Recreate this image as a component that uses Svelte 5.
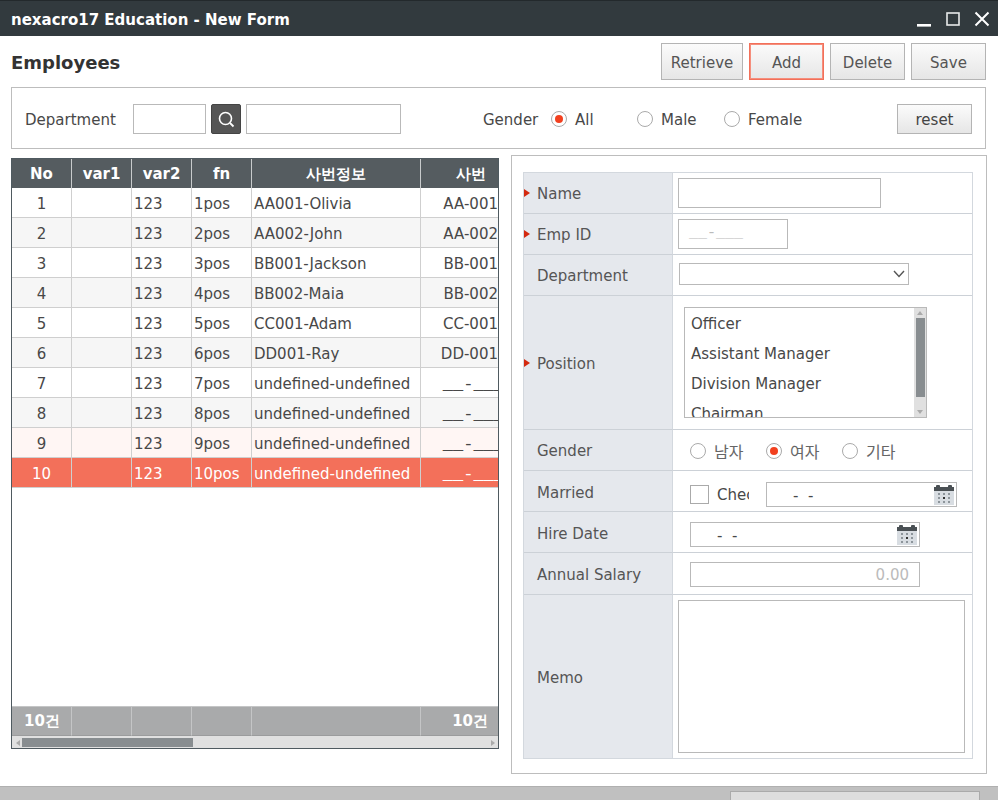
<script lang="ts">
	const rows = [
		{ no: 1, fn: '1pos', info: 'AA001-Olivia', id: 'AA-001' },
		{ no: 2, fn: '2pos', info: 'AA002-John', id: 'AA-002' },
		{ no: 3, fn: '3pos', info: 'BB001-Jackson', id: 'BB-001' },
		{ no: 4, fn: '4pos', info: 'BB002-Maia', id: 'BB-002' },
		{ no: 5, fn: '5pos', info: 'CC001-Adam', id: 'CC-001' },
		{ no: 6, fn: '6pos', info: 'DD001-Ray', id: 'DD-001' },
		{ no: 7, fn: '7pos', info: 'undefined-undefined', id: '__-___' },
		{ no: 8, fn: '8pos', info: 'undefined-undefined', id: '__-___' },
		{ no: 9, fn: '9pos', info: 'undefined-undefined', id: '__-___' },
		{ no: 10, fn: '10pos', info: 'undefined-undefined', id: '__-___' }
	];
	const positions = ['Officer', 'Assistant Manager', 'Division Manager', 'Chairman'];
</script>

{#snippet calendar()}
	<svg class="cal" viewBox="0 0 20 20" width="20" height="20">
		<rect x="0" y="2" width="20" height="18" fill="#d8dde2" />
		<rect x="0" y="2" width="20" height="4" fill="#4a5054" />
		<rect x="2" y="0" width="4" height="3" rx="1" fill="#4a5054" />
		<rect x="14" y="0" width="4" height="3" rx="1" fill="#4a5054" />
		{#each [8, 12, 16] as y}
			{#each [4, 9, 14] as x}
				<rect {x} {y} width="2" height="2" fill={x === 9 && y === 12 ? '#333' : '#8d959b'} />
			{/each}
		{/each}
	</svg>
{/snippet}

{#snippet radio(label: string, on: boolean)}
	<span class="radio-item">
		<span class="radio" class:on></span>
		<span class="radio-text">{label}</span>
	</span>
{/snippet}

<div class="window">
	<header class="titlebar">
		<span class="title">nexacro17 Education - New Form</span>
		<div class="win-btns">
			<svg viewBox="0 0 16 16" width="16" height="16"><rect x="1" y="13" width="14" height="2.6" fill="#fff" /></svg>
			<svg viewBox="0 0 16 16" width="16" height="16"><rect x="2" y="2" width="12" height="12" fill="none" stroke="#e8eaea" stroke-width="1.6" /></svg>
			<svg viewBox="0 0 16 16" width="16" height="16"><path d="M1.5 1.5 14.5 14.5M14.5 1.5 1.5 14.5" stroke="#fff" stroke-width="2" /></svg>
		</div>
	</header>

	<div class="head">
		<h1>Employees</h1>
		<div class="actions">
			<button class="btn retrieve">Retrieve</button>
			<button class="btn add">Add</button>
			<button class="btn delete">Delete</button>
			<button class="btn save">Save</button>
		</div>
	</div>

	<section class="search">
		<span class="s-label">Department</span>
		<span class="box code"></span>
		<button class="search-btn" aria-label="search">
			<svg viewBox="0 0 18 18" width="18" height="18">
				<circle cx="8.5" cy="8.5" r="6" fill="none" stroke="#fff" stroke-width="1.6" />
				<path d="M13 13 16.5 16.5" stroke="#fff" stroke-width="1.8" />
			</svg>
		</button>
		<span class="box dept-name"></span>
		<span class="g-label">Gender</span>
		<div class="g-radios">
			<span class="g-all">{@render radio('All', true)}</span>
			<span class="g-male">{@render radio('Male', false)}</span>
			<span>{@render radio('Female', false)}</span>
		</div>
		<button class="btn reset">reset</button>
	</section>

	<main class="body">
		<div class="grid">
			<div class="grid-row grid-head">
				<div>No</div><div>var1</div><div>var2</div><div>fn</div><div>사번정보</div><div class="head-id">사번</div>
			</div>
			{#each rows as r, i}
				<div class="grid-row data" class:alt={i % 2 === 1} class:blush={r.no === 9} class:selected={r.no === 10}>
					<div class="c">{r.no}</div>
					<div></div>
					<div>123</div>
					<div>{r.fn}</div>
					<div>{r.info}</div>
					<div class="r"><span class:blank={r.id.startsWith('_')}>{r.id}</span></div>
				</div>
			{/each}
			<div class="grid-blank"></div>
			<div class="grid-row grid-sum">
				<div>10건</div><div></div><div></div><div></div><div></div><div class="sum-r">10건</div>
			</div>
			<div class="hscroll">
				<span class="arrow-l"></span>
				<span class="thumb"></span>
				<span class="arrow-r"></span>
			</div>
		</div>

		<div class="detail">
			<div class="form">
				<div class="lbl req">Name</div>
				<div class="val"><span class="box name"></span></div>

				<div class="lbl req">Emp ID</div>
				<div class="val"><span class="box empid">__-___</span></div>

				<div class="lbl">Department</div>
				<div class="val">
					<span class="box combo">
						<svg viewBox="0 0 12 8" width="12" height="8"><path d="M1 1 6 6.5 11 1" fill="none" stroke="#555" stroke-width="1.4" /></svg>
					</span>
				</div>

				<div class="lbl req">Position</div>
				<div class="val">
					<div class="box list">
						<div class="items">
							{#each positions as p}
								<div class="item">{p}</div>
							{/each}
						</div>
						<div class="vscroll">
							<span class="up"></span>
							<span class="vthumb"></span>
							<span class="down"></span>
						</div>
					</div>
				</div>

				<div class="lbl">Gender</div>
				<div class="val gender">
					{@render radio('남자', false)}
					{@render radio('여자', true)}
					{@render radio('기타', false)}
				</div>

				<div class="lbl high">Married</div>
				<div class="val married">
					<span class="check"></span>
					<span class="check-text">Check</span>
					<span class="box date wide"><span class="dashes">-&nbsp;&nbsp;-</span>{@render calendar()}</span>
				</div>

				<div class="lbl high">Hire Date</div>
				<div class="val hire">
					<span class="box date"><span class="dashes">-&nbsp;&nbsp;-</span>{@render calendar()}</span>
				</div>

				<div class="lbl">Annual Salary</div>
				<div class="val salary-cell"><span class="box salary">0.00</span></div>

				<div class="lbl last">Memo</div>
				<div class="val last"><span class="box memo"></span></div>
			</div>
		</div>
	</main>

	<footer class="bottom">
		<span class="bottom-btn"></span>
	</footer>
</div>

<style>
	:global(body) {
		background: #fff;
	}

	.window {
		width: 998px;
		height: 800px;
		overflow: hidden;
		font-family: 'DejaVu Sans', sans-serif;
		font-size: 15px;
		color: #484848;
		display: flex;
		flex-direction: column;
	}

	.titlebar {
		height: 36px;
		box-sizing: border-box;
		flex: none;
		background: #323a3e;
		border-top: 1px solid #23292c;
		display: flex;
		align-items: center;
		justify-content: space-between;
		padding: 0 8px 0 11px;
	}

	.title {
		color: #fff;
		font-weight: 700;
		font-size: 15px;
		padding-top: 2px;
	}

	.win-btns {
		display: flex;
		gap: 13px;
	}

	.head {
		height: 51px;
		flex: none;
		display: flex;
		align-items: center;
		justify-content: space-between;
		padding: 0 12px 0 11px;
		box-sizing: border-box;
	}

	h1 {
		margin: 0;
		padding-top: 2px;
		font-size: 18px;
		font-weight: 700;
		color: #333;
	}

	.actions {
		display: flex;
		gap: 6px;
	}

	.btn {
		height: 37px;
		box-sizing: border-box;
		border: 1px solid #b4b4b4;
		background: linear-gradient(#fbfbfb, #e6e6e6);
		font: inherit;
		color: #555;
		padding: 2px 0 0;
	}

	.retrieve { width: 82px; }
	.btn.add {
		width: 75px;
		border-color: #f2705a;
		box-shadow: 0 0 0 1px #f58e7c inset;
	}
	.delete { width: 75px; }
	.save { width: 75px; }

	.search {
		flex: none;
		margin: 0 12px 0 11px;
		height: 62px;
		box-sizing: border-box;
		border: 1px solid #bdbdbd;
		display: flex;
		align-items: center;
		padding: 2px 0 0 13px;
	}

	.s-label { width: 108px; flex: none; padding-top: 2px; }

	.box {
		display: block;
		box-sizing: border-box;
		background: #fff;
		border: 1px solid #b9b9b9;
	}

	.code { width: 73px; height: 30px; flex: none; }

	.search-btn {
		width: 30px;
		height: 30px;
		flex: none;
		margin: 0 5px;
		padding: 0;
		border: 1px solid #444;
		border-radius: 2px;
		background: #555;
		display: flex;
		align-items: center;
		justify-content: center;
	}

	.dept-name { width: 155px; height: 30px; flex: none; }
	.g-label { margin-left: 82px; width: 68px; flex: none; padding-top: 2px; }

	.g-radios {
		display: flex;
		flex: none;
		width: 346px;
		padding-top: 2px;
	}

	.g-radios .radio-text { padding-top: 2px; }

	.g-all { width: 86px; }
	.g-male { width: 87px; }

	.radio-item {
		display: inline-flex;
		align-items: center;
		gap: 8px;
	}

	.radio {
		width: 16px;
		height: 16px;
		box-sizing: border-box;
		border-radius: 50%;
		border: 1px solid #aaa;
		background: #fff;
		position: relative;
		flex: none;
	}

	.radio.on::after {
		content: '';
		position: absolute;
		inset: 3px;
		border-radius: 50%;
		background: #f2401f;
	}

	.reset {
		width: 75px;
		height: 30px;
		color: #444;
	}

	.body {
		flex: 1;
		display: flex;
		align-items: flex-start;
		padding: 6px 12px 0 11px;
		gap: 12px;
		min-height: 0;
	}

	.grid {
		width: 488px;
		height: 591px;
		margin-top: 3px;
		box-sizing: border-box;
		border: 1px solid #4f5a60;
		display: flex;
		flex-direction: column;
		overflow: hidden;
		flex: none;
		background: #fff;
	}

	.grid-row {
		display: grid;
		grid-template-columns: 60px 60px 60px 60px 169px 77px;
		flex: none;
	}

	.grid-row > div {
		box-sizing: border-box;
		border-right: 1px solid #cfcfcf;
		border-bottom: 1px solid #cfcfcf;
		padding: 0 2px;
		height: 30px;
		line-height: 29px;
		white-space: nowrap;
		overflow: hidden;
	}

	.grid-row > div:last-child { border-right: none; }

	.grid-row.data > div { padding-top: 2px; }

	.grid-head > div {
		background: #555c60;
		color: #fff;
		font-weight: 700;
		text-align: center;
		border-color: #c8cbcc;
		border-bottom: none;
		height: 29px;
		line-height: 29px;
		padding-top: 1px;
	}

	.grid-row > .head-id { padding-left: 24px; }

	.data .c { text-align: center; }

	.grid-row.data > .r {
		text-align: right;
		padding-left: 0;
		padding-right: 0;
	}

	.data .r .blank {
		display: inline-block;
		font-family: 'Liberation Mono', monospace;
		font-size: 17px;
		margin-right: -6px;
	}

	.data.alt > div { background: #f6f6f6; }
	.data.blush > div { background: #fff6f4; }

	.data.selected > div {
		background: #f3705a;
		color: #fff;
	}

	.grid-blank { flex: 1; }

	.grid-sum > div {
		background: #a9aaab;
		color: #fff;
		font-weight: 700;
		height: 30px;
		border-bottom: 1px solid #9b9c9d;
		border-right-color: #c4c5c6;
		padding-left: 12px;
		border-top: 1px solid #c4c5c6;
	}

	.grid-sum .sum-r {
		text-align: right;
		padding: 0 10px 0 0;
	}

	.hscroll {
		height: 12px;
		flex: none;
		background: #e0e0e0;
		display: flex;
		align-items: center;
		padding-top: 1px;
		box-sizing: border-box;
	}

	.arrow-l, .arrow-r {
		width: 0;
		height: 0;
		border-top: 3px solid transparent;
		border-bottom: 3px solid transparent;
	}

	.arrow-l { border-right: 4px solid #aaa; margin: 0 2px 0 4px; }
	.arrow-r { border-left: 4px solid #aaa; margin-left: auto; margin-right: 3px; }

	.thumb {
		width: 171px;
		height: 9px;
		background: #888d90;
	}

	.detail {
		width: 476px;
		height: 619px;
		box-sizing: border-box;
		border: 1px solid #bdbdbd;
		padding: 16px 13px 13px 11px;
		flex: none;
	}

	.form {
		display: grid;
		grid-template-columns: 149px 1fr;
		grid-template-rows: 41px 41px 41px 134px 41px 41px 41px 42px 163px;
		border: 1px solid #d3d8de;
		box-sizing: border-box;
		height: 587px;
		width: 450px;
	}

	.lbl {
		background: #e5e8ed;
		border-right: 1px solid #d3d8de;
		border-bottom: 1px solid #ccd1d7;
		padding: 2px 0 0 13px;
		display: flex;
		align-items: center;
		position: relative;
		color: #555;
	}

	.lbl.high { padding-top: 3px; }

	.lbl.req::before {
		content: '';
		position: absolute;
		left: 0;
		top: 50%;
		margin-top: -4px;
		border-left: 6px solid #d42a10;
		border-top: 4px solid transparent;
		border-bottom: 4px solid transparent;
	}

	.val {
		border-bottom: 1px solid #ccd1d7;
		padding-left: 5px;
		display: flex;
		align-items: center;
		min-width: 0;
	}

	.last { border-bottom: none; }

	.name { width: 203px; height: 30px; }

	.empid {
		width: 110px;
		height: 30px;
		padding-left: 10px;
		line-height: 28px;
		font-family: 'Liberation Mono', monospace;
		color: #bbb;
	}

	.combo {
		width: 230px;
		height: 22px;
		display: flex;
		align-items: center;
		justify-content: flex-end;
		padding-right: 3px;
		margin: 0 0 3px 1px;
	}

	.list {
		margin-left: 6px;
		width: 243px;
		height: 111px;
		display: flex;
		overflow: hidden;
	}

	.items {
		flex: 1;
		padding: 1px 0 0 6px;
	}

	.item {
		height: 30px;
		line-height: 30px;
		white-space: nowrap;
	}

	.vscroll {
		width: 12px;
		background: #e0e0e0;
		display: flex;
		flex-direction: column;
		align-items: center;
		justify-content: space-between;
		padding: 3px 0;
		box-sizing: border-box;
	}

	.vthumb {
		width: 9px;
		flex: 1;
		margin: 3px 0 13px;
		background: #888d90;
	}

	.up, .down {
		width: 0;
		height: 0;
		border-left: 3px solid transparent;
		border-right: 3px solid transparent;
	}

	.up { border-bottom: 4px solid #aaa; }
	.down { border-top: 4px solid #aaa; }

	.gender {
		padding: 2px 0 0 17px;
		font-family: 'Noto Sans CJK KR', sans-serif;
		font-size: 16px;
		color: #666;
	}

	.gender .radio-item { width: 76px; }

	.married {
		padding: 7px 0 0 17px;
	}

	.check {
		width: 19px;
		height: 19px;
		box-sizing: border-box;
		border: 1px solid #aaa;
		flex: none;
	}

	.check-text {
		width: 32px;
		margin: 0 17px 0 8px;
		overflow: hidden;
		white-space: nowrap;
		flex: none;
	}

	.date {
		width: 230px;
		height: 25px;
		display: flex;
		align-items: center;
		padding-left: 26px;
		justify-content: space-between;
		padding-right: 2px;
		flex: none;
	}

	.date.wide {
		width: 191px;
	}

	.dashes { padding-top: 2px; }

	.hire { padding: 5px 0 0 17px; }

	.salary-cell { padding: 1px 0 0 17px; }

	.salary {
		width: 230px;
		height: 25px;
		line-height: 25px;
		text-align: right;
		padding-right: 10px;
		color: #bbb;
	}

	.memo {
		width: 287px;
		height: 153px;
	}

	.bottom {
		position: absolute;
		top: 786px;
		left: 0;
		width: 998px;
		height: 14px;
		background: #c0c0c0;
		border-top: 1px solid #b0b0b0;
		box-sizing: border-box;
		overflow: hidden;
	}

	.bottom-btn {
		position: absolute;
		left: 730px;
		top: 4px;
		width: 250px;
		height: 30px;
		box-sizing: border-box;
		border: 1px solid #aaa;
		background: #ddd;
	}
</style>
